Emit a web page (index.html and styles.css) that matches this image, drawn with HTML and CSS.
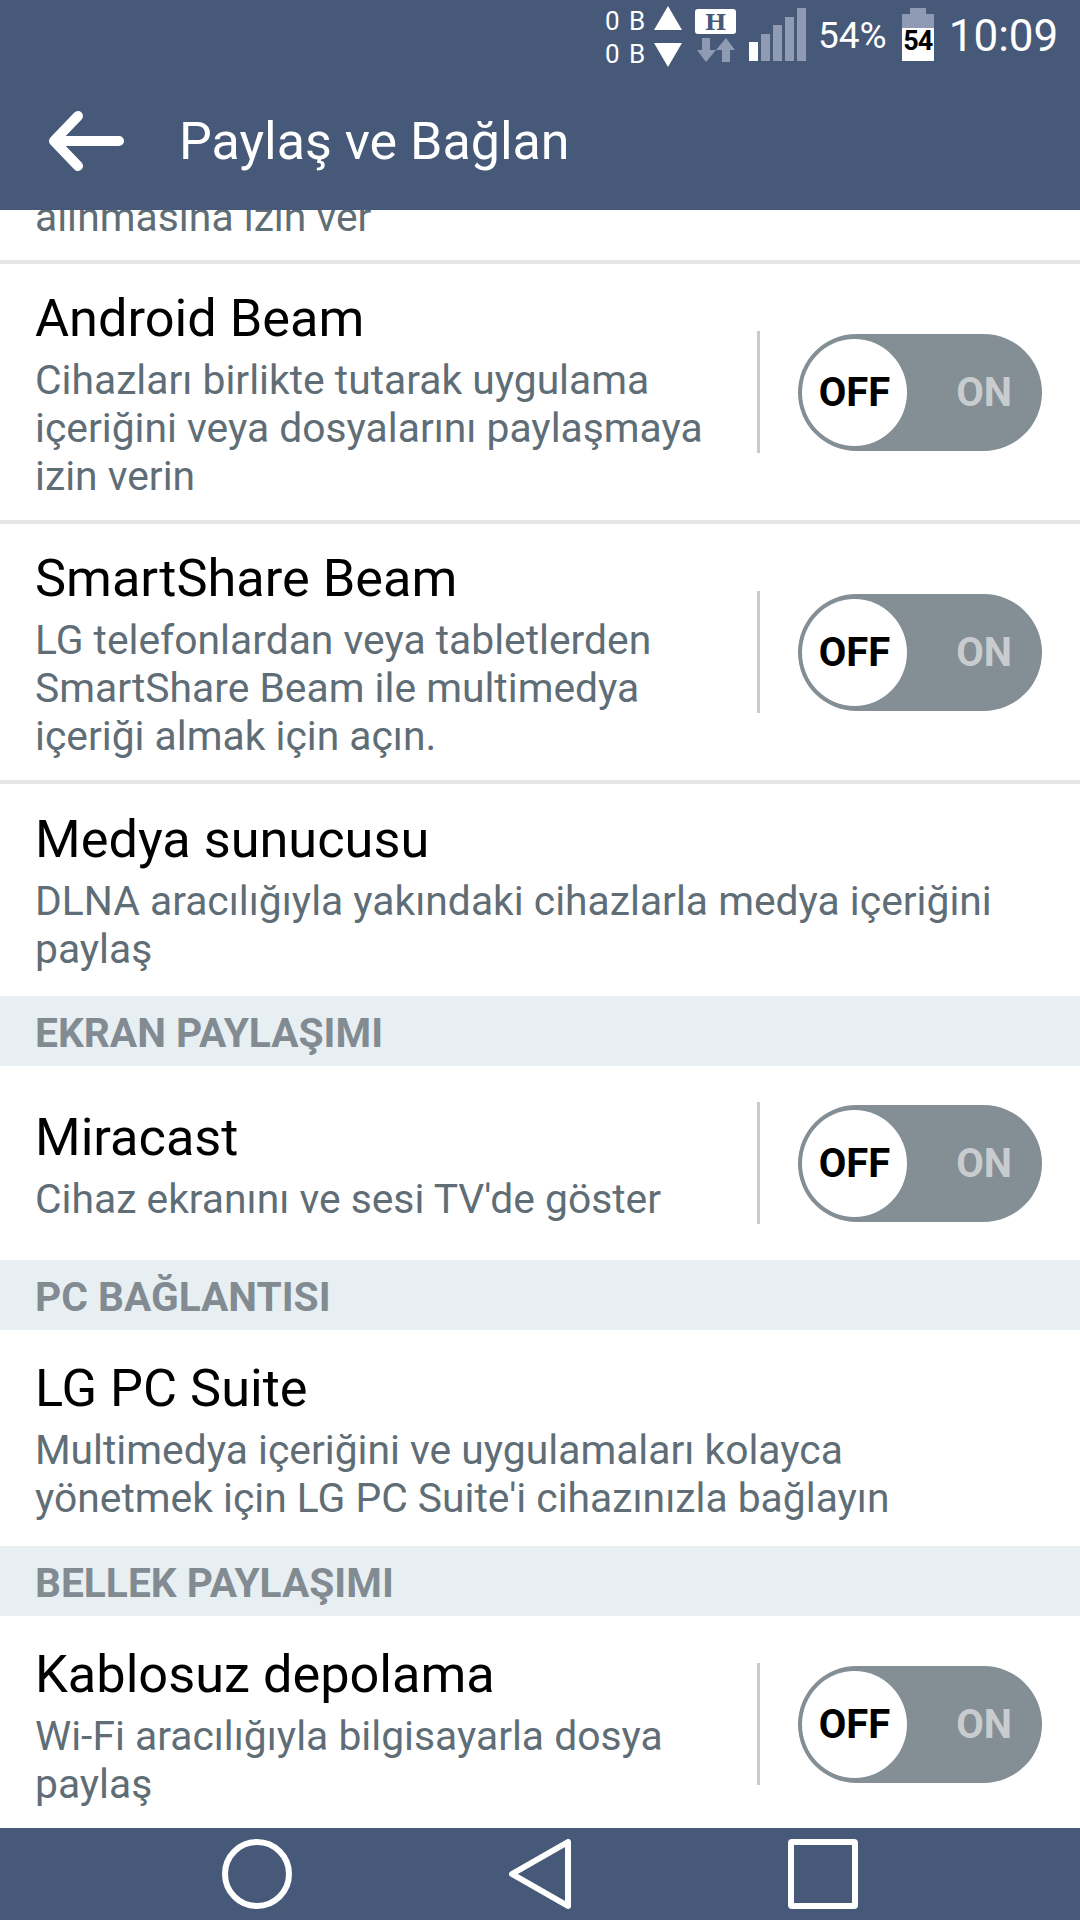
FILE: index.html
```html
<!DOCTYPE html>
<html>

<head>
  <meta name="viewport" content="width=device-width, initial-scale=1.0">
  <title>Paylaş ve Bağlan</title>
  <link rel="stylesheet" href="styles.css">
</head>

<body>
  <div class="phone">
    <!-- Status bar -->
    <div class="statusbar">
      <div class="traffic"><span>0 B</span><span>0 B</span></div>
      <svg class="traffic-arrows" width="28" height="62" viewBox="0 0 28 62">
        <polygon points="14,0 28,24 0,24" fill="#fff" />
        <polygon points="0,37 28,37 14,61" fill="#fff" />
      </svg>
      <div class="network">
        <span class="network-h">H</span>
        <svg width="38" height="24" viewBox="0 0 38 24">
          <path d="M5 0h8v12h6L9 24 0 12h5z" fill="#8f9bb3" />
          <path d="M25 24h8V12h5L29 0 19 12h6z" fill="#8f9bb3" />
        </svg>
      </div>
      <svg class="signal" width="57" height="53" viewBox="0 0 57 53">
        <rect x="0" y="34" width="9" height="19" fill="#fff" />
        <rect x="12" y="26" width="9" height="27" fill="#8f9bb3" />
        <rect x="24" y="17" width="9" height="36" fill="#8f9bb3" />
        <rect x="36" y="9" width="9" height="44" fill="#8f9bb3" />
        <rect x="48" y="0" width="9" height="53" fill="#8f9bb3" />
      </svg>
      <span class="percent">54%</span>
      <div class="battery"><span>54</span></div>
      <span class="clock">10:09</span>
    </div>

    <!-- Toolbar -->
    <div class="toolbar">
      <svg class="back" width="76" height="60" viewBox="0 0 76 60">
        <path d="M71 30H6M30 5L6 30l24 25" fill="none" stroke="#fff" stroke-width="10" stroke-linecap="round" stroke-linejoin="round" />
      </svg>
      <span class="toolbar-title">Paylaş ve Bağlan</span>
    </div>

    <!-- Settings list -->
    <div class="list">
      <div class="row row-cut">
        <div class="row-sub">alınmasına izin ver</div>
      </div>

      <div class="row row-lined">
        <div class="row-text">
          <div class="row-title">Android Beam</div>
          <div class="row-sub">Cihazları birlikte tutarak uygulama<br>içeriğini veya dosyalarını paylaşmaya<br>izin verin</div>
        </div>
        <div class="toggle-wrap">
          <div class="toggle"><span class="knob">OFF</span><span class="on">ON</span></div>
        </div>
      </div>

      <div class="row row-lined">
        <div class="row-text">
          <div class="row-title">SmartShare Beam</div>
          <div class="row-sub">LG telefonlardan veya tabletlerden<br>SmartShare Beam ile multimedya<br>içeriği almak için açın.</div>
        </div>
        <div class="toggle-wrap">
          <div class="toggle"><span class="knob">OFF</span><span class="on">ON</span></div>
        </div>
      </div>

      <div class="row row-media">
        <div class="row-text">
          <div class="row-title">Medya sunucusu</div>
          <div class="row-sub">DLNA aracılığıyla yakındaki cihazlarla medya içeriğini<br>paylaş</div>
        </div>
      </div>

      <div class="section">EKRAN PAYLAŞIMI</div>

      <div class="row row-one">
        <div class="row-text">
          <div class="row-title">Miracast</div>
          <div class="row-sub">Cihaz ekranını ve sesi TV'de göster</div>
        </div>
        <div class="toggle-wrap">
          <div class="toggle"><span class="knob">OFF</span><span class="on">ON</span></div>
        </div>
      </div>

      <div class="section">PC BAĞLANTISI</div>

      <div class="row row-two">
        <div class="row-text">
          <div class="row-title">LG PC Suite</div>
          <div class="row-sub">Multimedya içeriğini ve uygulamaları kolayca<br>yönetmek için LG PC Suite'i cihazınızla bağlayın</div>
        </div>
      </div>

      <div class="section">BELLEK PAYLAŞIMI</div>

      <div class="row row-two">
        <div class="row-text">
          <div class="row-title">Kablosuz depolama</div>
          <div class="row-sub">Wi-Fi aracılığıyla bilgisayarla dosya<br>paylaş</div>
        </div>
        <div class="toggle-wrap">
          <div class="toggle"><span class="knob">OFF</span><span class="on">ON</span></div>
        </div>
      </div>
    </div>

    <!-- Navigation bar -->
    <div class="navbar">
      <svg width="70" height="70" viewBox="0 0 70 70">
        <circle cx="35" cy="35" r="32" fill="none" stroke="#fff" stroke-width="6" />
      </svg>
      <svg width="62" height="70" viewBox="0 0 62 70">
        <path d="M59 3v64L3 35z" fill="none" stroke="#fff" stroke-width="6" stroke-linejoin="round" />
      </svg>
      <svg width="70" height="70" viewBox="0 0 70 70">
        <rect x="3" y="3" width="64" height="64" rx="1" fill="none" stroke="#fff" stroke-width="6" />
      </svg>
    </div>
  </div>
</body>

</html>
```

FILE: styles.css
```css
body {
  margin: 0;
  padding: 0;
  background-color: #ffffff;
  font-family: Roboto, "Liberation Sans", sans-serif;
}

.phone {
  width: 1080px;
  height: 1920px;
  display: flex;
  flex-direction: column;
  overflow: hidden;
}

/* Status bar */
.statusbar {
  height: 72px;
  flex-shrink: 0;
  display: flex;
  align-items: flex-start;
  padding-left: 605px;
  background-color: #465979;
  color: #ffffff;
  box-sizing: border-box;
}

.traffic {
  display: flex;
  flex-direction: column;
  margin-top: 5px;
  width: 49px;
  font-size: 26px;
  line-height: 33px;
  letter-spacing: 1.5px;
  white-space: nowrap;
}

.traffic-arrows {
  margin-top: 6px;
}

.network {
  display: flex;
  flex-direction: column;
  align-items: center;
  gap: 4px;
  width: 41px;
  margin: 9px 0 0 13px;
}

.network-h {
  width: 41px;
  height: 25px;
  background-color: #ffffff;
  border-radius: 3px;
  color: #465979;
  font-family: "DejaVu Serif", serif;
  font-weight: bold;
  font-size: 23px;
  line-height: 25px;
  text-align: center;
}

.signal {
  margin: 8px 0 0 13px;
}

.percent {
  margin: 15px 0 0 12px;
  font-size: 37px;
  line-height: 42px;
}

.battery {
  position: relative;
  width: 32px;
  height: 47px;
  margin: 14px 0 0 15px;
  background: linear-gradient(#8f9bb3 14px, #ffffff 14px);
  color: #000000;
  font-size: 27px;
  font-weight: bold;
  line-height: 54px;
  text-align: center;
  letter-spacing: -1px;
}

.battery:before {
  content: "";
  position: absolute;
  top: -6px;
  left: 8px;
  width: 16px;
  height: 6px;
  background-color: #8f9bb3;
}

.clock {
  margin: 11px 0 0 15px;
  font-size: 44px;
  line-height: 50px;
}

/* Toolbar */
.toolbar {
  height: 138px;
  flex-shrink: 0;
  display: flex;
  align-items: center;
  background-color: #465979;
  color: #ffffff;
  box-sizing: border-box;
  padding: 0 0 0 48px;
}

.back {
  flex-shrink: 0;
}

.toolbar-title {
  margin-left: 55px;
  font-size: 52px;
}

/* List */
.list {
  flex: 1;
  overflow: hidden;
}

.row {
  display: flex;
  align-items: center;
  padding: 0 38px 0 35px;
  box-sizing: border-box;
}

.row-cut {
  height: 54px;
  align-items: flex-start;
  border-bottom: 4px solid #e5e5e5;
}

.row-cut .row-sub {
  margin-top: -17px;
}

.row-lined {
  height: 260px;
  border-bottom: 4px solid #e5e5e5;
}

.row-media {
  height: 212px;
  padding-bottom: 2px;
}

.row-two {
  height: 216px;
}

.row-one {
  height: 194px;
}

.row-text {
  flex: 1;
  min-width: 0;
}

.row-title {
  color: #000000;
  font-size: 52.3px;
  line-height: 64px;
  margin: 2px 0 6px;
}

.row-sub {
  color: #5f6d76;
  font-size: 40.8px;
  line-height: 48px;
  white-space: nowrap;
}

.section {
  height: 70px;
  padding-left: 35px;
  background-color: #e8eff3;
  color: #818b91;
  font-size: 40.7px;
  font-weight: bold;
  line-height: 74px;
}

/* Switch */
.toggle-wrap {
  flex-shrink: 0;
  height: 122px;
  display: flex;
  align-items: center;
  padding-left: 38px;
  border-left: 3px solid #c8ccd1;
}

.toggle {
  position: relative;
  width: 244px;
  height: 117px;
  border-radius: 59px;
  background-color: #838e95;
}

.knob {
  position: absolute;
  top: 5px;
  left: 4px;
  width: 105px;
  height: 107px;
  border-radius: 50%;
  background-color: #ffffff;
  color: #000000;
  font-size: 40px;
  font-weight: bold;
  line-height: 107px;
  text-align: center;
}

.on {
  position: absolute;
  top: 0;
  right: 30px;
  color: #c9cccf;
  font-size: 40px;
  font-weight: bold;
  line-height: 117px;
}

/* Navigation bar */
.navbar {
  height: 92px;
  flex-shrink: 0;
  display: flex;
  align-items: center;
  padding-left: 222px;
  gap: 217px;
  background-color: #465979;
}
```
